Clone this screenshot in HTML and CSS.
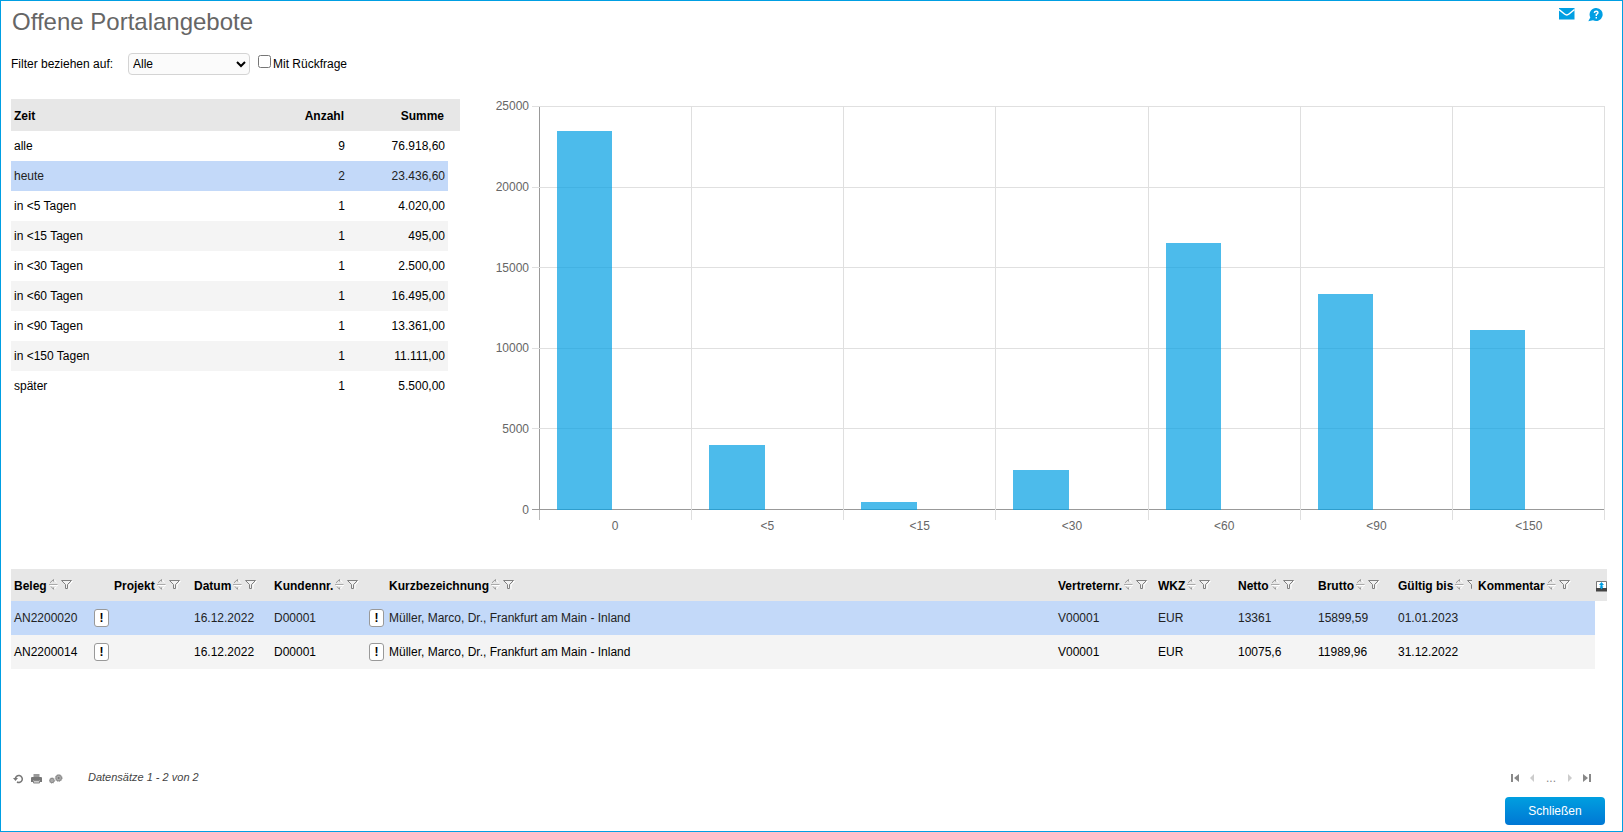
FILE: index.html
```html
<!DOCTYPE html>
<html lang="de">
<head>
<meta charset="utf-8">
<title>Offene Portalangebote</title>
<link rel="stylesheet" href="styles.css">
</head>
<body>
<svg class="sprite" aria-hidden="true">
  <symbol id="sort" viewBox="0 0 9 11"><path d="M5.500 1L7.500 3.500M1 6.500H9M5.500 10L7.500 7.500" fill="none" stroke="#fff"/><path d="M1 3.800L4.500.5V2.500M2 7.500L4.500 10.300V8.500" fill="none" stroke="#999"/><path d="M0 5.500H8.500" fill="none" stroke="#aaa"/></symbol>
  <symbol id="filter" viewBox="0 0 12 10"><path d="M1.500 1.500H11.500L8 5V9.500" fill="none" stroke="#fff"/><path d="M.5.500H10.500L6.500 4.500V8.500H4.500V4.500Z" fill="#f2f2f2" stroke="#808080"/></symbol>
</svg>
<div class="page">
  <header class="top">
    <h1>Offene Portalangebote</h1>
    <div class="top-actions">
      <button type="button" class="icon-btn" aria-label="Nachricht"><svg width="16" height="12" viewBox="0 0 16 12"><path fill="#009fe3" d="M0 0H15.500V11.500H0Z"/><path d="M0 1.500L5.500 6Q7.800 7.800 10 6L15.500 1.500" fill="none" stroke="#fff" stroke-width="1.500"/></svg></button>
      <button type="button" class="icon-btn" aria-label="Hilfe"><svg width="16" height="14" viewBox="0 0 16 14"><path fill="#009fe3" d="M8.300 0a6.500 6.500 0 1 1-3.300 12.200L.3 13.300 2.300 9.500A6.500 6.500 0 0 1 8.300 0Z"/><path d="M6.300 4.800Q6.500 3.200 8.200 3.200 10 3.200 10 4.800 10 5.800 8.300 6.500V8M8.300 9V10.500" fill="none" stroke="#fff" stroke-width="1.400"/></svg></button>
    </div>
  </header>

  <form class="filters">
    <label class="filter-label" for="scope">Filter beziehen auf:</label>
    <select id="scope"><option>Alle</option></select>
    <input type="checkbox" id="query"><label for="query">Mit Rückfrage</label>
  </form>

  <section class="overview">
    <table class="summary">
      <colgroup><col><col class="w100"><col class="w100"><col class="w12"></colgroup>
      <thead><tr><th>Zeit</th><th class="num">Anzahl</th><th class="num">Summe</th><th></th></tr></thead>
      <tbody>
        <tr><td>alle</td><td class="num">9</td><td class="num">76.918,60</td></tr>
        <tr class="selected"><td>heute</td><td class="num">2</td><td class="num">23.436,60</td></tr>
        <tr><td>in &lt;5 Tagen</td><td class="num">1</td><td class="num">4.020,00</td></tr>
        <tr><td>in &lt;15 Tagen</td><td class="num">1</td><td class="num">495,00</td></tr>
        <tr><td>in &lt;30 Tagen</td><td class="num">1</td><td class="num">2.500,00</td></tr>
        <tr><td>in &lt;60 Tagen</td><td class="num">1</td><td class="num">16.495,00</td></tr>
        <tr><td>in &lt;90 Tagen</td><td class="num">1</td><td class="num">13.361,00</td></tr>
        <tr><td>in &lt;150 Tagen</td><td class="num">1</td><td class="num">11.111,00</td></tr>
        <tr><td>später</td><td class="num">1</td><td class="num">5.500,00</td></tr>
      </tbody>
    </table>

    <div class="chart">
      <div class="y-axis"><span>25000</span><span>20000</span><span>15000</span><span>10000</span><span>5000</span><span>0</span></div>
      <div class="plot">
        <div class="lines"><i></i><i></i><i></i><i></i><i></i></div>
        <div class="slot"><div class="bar" style="height:93.75%"></div></div>
        <div class="slot"><div class="bar" style="height:16.08%"></div></div>
        <div class="slot"><div class="bar" style="height:1.98%"></div></div>
        <div class="slot"><div class="bar" style="height:10%"></div></div>
        <div class="slot"><div class="bar" style="height:65.98%"></div></div>
        <div class="slot"><div class="bar" style="height:53.44%"></div></div>
        <div class="slot"><div class="bar" style="height:44.44%"></div></div>
      </div>
      <div class="x-axis"><span>0</span><span>&lt;5</span><span>&lt;15</span><span>&lt;30</span><span>&lt;60</span><span>&lt;90</span><span>&lt;150</span></div>
    </div>
  </section>

  <table class="offers">
    <colgroup><col class="w80"><col class="w20"><col class="w80"><col class="w80"><col class="w95"><col class="w20"><col><col class="w100"><col class="w80"><col class="w80"><col class="w80"><col class="w80"><col class="w120"><col class="w12"></colgroup>
    <thead><tr>
      <th><div class="head">Beleg<button type="button" class="sort" aria-label="Sortieren"><svg><use href="#sort"/></svg></button><button type="button" class="filter" aria-label="Filtern"><svg><use href="#filter"/></svg></button></div></th>
      <th></th>
      <th><div class="head">Projekt<button type="button" class="sort" aria-label="Sortieren"><svg><use href="#sort"/></svg></button><button type="button" class="filter" aria-label="Filtern"><svg><use href="#filter"/></svg></button></div></th>
      <th><div class="head">Datum<button type="button" class="sort" aria-label="Sortieren"><svg><use href="#sort"/></svg></button><button type="button" class="filter" aria-label="Filtern"><svg><use href="#filter"/></svg></button></div></th>
      <th><div class="head">Kundennr.<button type="button" class="sort" aria-label="Sortieren"><svg><use href="#sort"/></svg></button><button type="button" class="filter" aria-label="Filtern"><svg><use href="#filter"/></svg></button></div></th>
      <th></th>
      <th><div class="head">Kurzbezeichnung<button type="button" class="sort" aria-label="Sortieren"><svg><use href="#sort"/></svg></button><button type="button" class="filter" aria-label="Filtern"><svg><use href="#filter"/></svg></button></div></th>
      <th><div class="head">Vertreternr.<button type="button" class="sort" aria-label="Sortieren"><svg><use href="#sort"/></svg></button><button type="button" class="filter" aria-label="Filtern"><svg><use href="#filter"/></svg></button></div></th>
      <th><div class="head">WKZ<button type="button" class="sort" aria-label="Sortieren"><svg><use href="#sort"/></svg></button><button type="button" class="filter" aria-label="Filtern"><svg><use href="#filter"/></svg></button></div></th>
      <th><div class="head">Netto<button type="button" class="sort" aria-label="Sortieren"><svg><use href="#sort"/></svg></button><button type="button" class="filter" aria-label="Filtern"><svg><use href="#filter"/></svg></button></div></th>
      <th><div class="head">Brutto<button type="button" class="sort" aria-label="Sortieren"><svg><use href="#sort"/></svg></button><button type="button" class="filter" aria-label="Filtern"><svg><use href="#filter"/></svg></button></div></th>
      <th><div class="head">Gültig bis<button type="button" class="sort" aria-label="Sortieren"><svg><use href="#sort"/></svg></button><button type="button" class="filter" aria-label="Filtern"><svg><use href="#filter"/></svg></button></div></th>
      <th><div class="head">Kommentar<button type="button" class="sort" aria-label="Sortieren"><svg><use href="#sort"/></svg></button><button type="button" class="filter" aria-label="Filtern"><svg><use href="#filter"/></svg></button></div></th>
      <th class="tool"><button type="button" class="icon-btn" aria-label="Spalten"><svg width="11" height="11" viewBox="0 0 11 11"><path fill="#fff" stroke="#777" d="M.5.500H10.500V8H.5Z"/><path fill="#444" d="M0 7H11V10.500H0Z"/><path fill="#009fe3" d="M5.500 1L8 4H6.500V5.500H7.500L5.500 8.500 3.500 5.500H4.500V4H3Z"/></svg></button></th>
    </tr></thead>
    <tbody>
      <tr class="selected"><td>AN2200020</td><td><button type="button" class="info">!</button></td><td></td><td>16.12.2022</td><td>D00001</td><td><button type="button" class="info">!</button></td><td>Müller, Marco, Dr., Frankfurt am Main - Inland</td><td>V00001</td><td>EUR</td><td>13361</td><td>15899,59</td><td>01.01.2023</td><td></td></tr>
      <tr class="even"><td>AN2200014</td><td><button type="button" class="info">!</button></td><td></td><td>16.12.2022</td><td>D00001</td><td><button type="button" class="info">!</button></td><td>Müller, Marco, Dr., Frankfurt am Main - Inland</td><td>V00001</td><td>EUR</td><td>10075,6</td><td>11989,96</td><td>31.12.2022</td><td></td></tr>
    </tbody>
  </table>

  <footer>
    <div class="status">
      <div class="tools">
        <button type="button" class="icon-btn" aria-label="Aktualisieren"><svg width="11" height="10" viewBox="0 0 11 10"><path d="M2.300 5A3.500 3.500 0 1 1 4 8" fill="none" stroke="#777" stroke-width="1.500"/><path fill="#777" d="M0 4H5L2.500 7Z"/></svg></button>
        <button type="button" class="icon-btn" aria-label="Drucken"><svg width="11" height="10" viewBox="0 0 11 10"><path fill="#999" d="M2.500 0H8.500V3H2.500Z"/><path fill="#777" d="M1 3H10Q11 3 11 4V8H9V6H2V8H0V4Q0 3 1 3Z"/><path fill="#ccc" stroke="#888" d="M2.500 6.500H8.500V9H2.500Z"/></svg></button>
        <button type="button" class="icon-btn" aria-label="Einstellungen"><svg width="14" height="10" viewBox="0 0 14 10"><g fill="#aaa" stroke="#888"><circle cx="3" cy="6.500" r="2.200"/><circle cx="9.700" cy="4" r="2.900"/></g><g fill="none" stroke="#999" stroke-dasharray="1 1"><circle cx="3" cy="6.500" r="2.700"/><circle cx="9.700" cy="4" r="3.500"/></g><circle cx="9.700" cy="4" r="1" fill="#777"/></svg></button>
      </div>
      <span class="count">Datensätze 1 - 2 von 2</span>
      <nav class="pager">
        <button type="button" class="icon-btn" aria-label="Erste Seite"><svg width="9" height="8" viewBox="0 0 9 8"><path fill="#888" d="M1 0H3V8H1ZM9 0V8L4 4Z"/></svg></button>
        <button type="button" class="icon-btn" aria-label="Zurück"><svg width="9" height="8" viewBox="0 0 9 8"><path fill="#ccc" d="M6 0V8L2 4Z"/></svg></button>
        <span>...</span>
        <button type="button" class="icon-btn" aria-label="Weiter"><svg width="9" height="8" viewBox="0 0 9 8"><path fill="#ccc" d="M3 0V8L7 4Z"/></svg></button>
        <button type="button" class="icon-btn" aria-label="Letzte Seite"><svg width="9" height="8" viewBox="0 0 9 8"><path fill="#888" d="M6 0H8V8H6ZM0 0V8L5 4Z"/></svg></button>
      </nav>
    </div>
    <button type="button" class="close">Schließen</button>
  </footer>
</div>
</body>
</html>
```
FILE: styles.css
```css
* { box-sizing: border-box; }
body {
  margin: 0;
  background: #fff;
  color: #000;
  font: 12px/16px "Liberation Sans", Arial, sans-serif;
}
button, select, input { margin: 0; font: inherit; color: inherit; }
.sprite { position: absolute; width: 0; height: 0; }
.page {
  display: flex;
  flex-direction: column;
  min-height: 100vh;
  padding: 6px 15px 6px 10px;
  border: 1px solid #009fe3;
}
.icon-btn { display: block; padding: 0; border: 0; background: none; line-height: 0; }
.icon-btn svg { display: block; }

.top { display: flex; justify-content: space-between; padding-left: 1px; }
h1 { margin: 0; font-size: 24px; font-weight: 400; line-height: 30px; color: #666; }
.top-actions { display: flex; gap: 13px; padding: 1px 3px 0 0; align-items: flex-start; }

.filters { display: flex; align-items: center; height: 22px; margin: 16px 0 24px; }
.filter-label { width: 117px; }
#scope { width: 122px; height: 22px; padding: 0; border: 1px solid #d4d4d4; border-radius: 4px; background: #fbfbfb; }
#query { width: 13px; height: 13px; margin: 0 2px 5px 8px; }

table { border-collapse: collapse; table-layout: fixed; }
th, td { padding: 0 3px; overflow: hidden; text-align: left; white-space: nowrap; }
th { height: 32px; padding-top: 2px; background: #e7e7e7; font-weight: 700; }
.num { text-align: right; }
.selected td { background: #c3d9f9; color: #222; }
.w12 { width: 12px; } .w20 { width: 20px; } .w80 { width: 80px; }
.w95 { width: 95px; } .w100 { width: 100px; } .w120 { width: 120px; }

.overview { display: flex; align-items: flex-start; gap: 31px; min-height: 470px; }
.summary { flex: none; width: 449px; }
.summary td { height: 30px; }
.summary th.num { padding-right: 4px; }
.summary tr:nth-child(even):not(.selected) td { background: #f4f4f4; }

.chart {
  flex: 1;
  display: grid;
  grid-template-columns: 38px 1fr;
  column-gap: 10px;
  padding: 7px 2px 0 0;
  color: #666;
}
.y-axis { display: flex; flex-direction: column; justify-content: space-between; margin: -8px 0; text-align: right; }
.plot { position: relative; display: flex; height: 404px; border-left: 1px solid #999; }
.lines { position: absolute; inset: 0 0 0 -8px; display: flex; flex-direction: column; border-bottom: 1px solid #999; }
.lines i { flex: 1; border-top: 1px solid #e0e0e0; }
.slot { position: relative; display: flex; flex: 1; align-items: flex-end; padding-left: 17px; }
.slot::after { content: ""; position: absolute; top: 0; right: 0; bottom: -10px; border-right: 1px solid #dfdfdf; }
.slot:nth-child(2)::before { content: ""; position: absolute; top: 100%; left: -1px; height: 10px; border-left: 1px solid #bbb; }
.bar { width: 41%; background: rgba(0, 158, 227, .7); }
.x-axis { grid-column: 2; display: flex; padding-top: 8px; }
.x-axis span { flex: 1; text-align: center; }

.offers { width: 100%; }
.offers td { height: 34px; }
.offers .even td { background: #f4f4f4; }
.head { display: flex; align-items: center; overflow: hidden; }
.sort, .filter { flex: none; padding: 0; border: 0; background: none; }
.sort svg { display: block; width: 9px; height: 11px; }
.sort { margin: 0 3px 3px 2px; }
.filter svg { display: block; width: 12px; height: 10px; }
.filter { margin-bottom: 3px; }
.offers .tool { padding: 2px 0 0 1px; }
.info {
  display: block;
  width: 15px;
  height: 18px;
  padding: 0;
  border: 1px solid #999;
  border-radius: 3px;
  background: #fff;
  color: #000;
  font-weight: 700;
  line-height: 16px;
}

footer { display: flex; flex-direction: column; align-items: flex-end; gap: 11px; margin-top: auto; }
.status { display: flex; align-items: center; align-self: stretch; height: 16px; padding: 0 15px 0 2px; }
.tools { display: flex; gap: 7px; padding-top: 2px; }
.count { margin-left: 25px; padding-bottom: 2px; color: #444; font-size: 11px; font-style: italic; }
.pager { display: flex; align-items: center; gap: 9px; margin-left: auto; color: #888; }
.close {
  width: 100px;
  height: 28px;
  margin-right: 2px;
  padding: 0;
  border: 0;
  border-radius: 4px;
  background: linear-gradient(#009fe0, #0077d4);
  color: #fff;
}
```
